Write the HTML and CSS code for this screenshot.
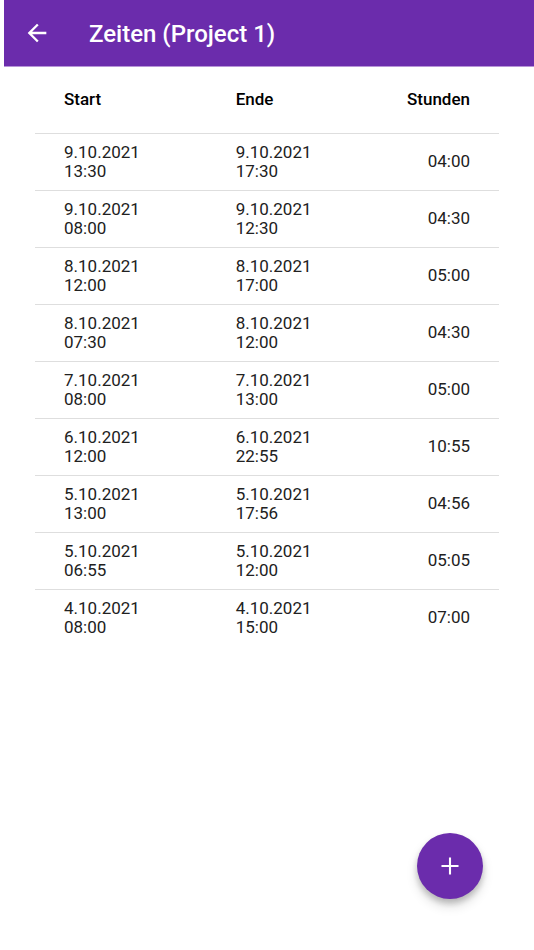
FILE: index.html
```html
<!DOCTYPE html>
<html lang="de">
<head>
  <meta charset="UTF-8" />
  <meta name="viewport" content="width=device-width, initial-scale=1.0" />
  <title>Zeiten (Project 1)</title>
  <link rel="stylesheet" href="styles.css">
</head>
<body>
  <header class="app-bar">
    <button class="back-btn" type="button" aria-label="Zurück">
      <svg viewBox="0 0 24 24" aria-hidden="true"><path d="M20 11H7.83l5.59-5.59L12 4l-8 8 8 8 1.41-1.41L7.83 13H20v-2z"/></svg>
    </button>
    <h1 class="title">Zeiten (Project 1)</h1>
  </header>

  <main class="content">
    <table class="times">
      <thead>
        <tr><th scope="col">Start</th><th scope="col">Ende</th><th scope="col" class="hours">Stunden</th></tr>
      </thead>
      <tbody>
        <tr><td>9.10.2021<br>13:30</td><td>9.10.2021<br>17:30</td><td class="hours">04:00</td></tr>
        <tr><td>9.10.2021<br>08:00</td><td>9.10.2021<br>12:30</td><td class="hours">04:30</td></tr>
        <tr><td>8.10.2021<br>12:00</td><td>8.10.2021<br>17:00</td><td class="hours">05:00</td></tr>
        <tr><td>8.10.2021<br>07:30</td><td>8.10.2021<br>12:00</td><td class="hours">04:30</td></tr>
        <tr><td>7.10.2021<br>08:00</td><td>7.10.2021<br>13:00</td><td class="hours">05:00</td></tr>
        <tr><td>6.10.2021<br>12:00</td><td>6.10.2021<br>22:55</td><td class="hours">10:55</td></tr>
        <tr><td>5.10.2021<br>13:00</td><td>5.10.2021<br>17:56</td><td class="hours">04:56</td></tr>
        <tr><td>5.10.2021<br>06:55</td><td>5.10.2021<br>12:00</td><td class="hours">05:05</td></tr>
        <tr><td>4.10.2021<br>08:00</td><td>4.10.2021<br>15:00</td><td class="hours">07:00</td></tr>
      </tbody>
    </table>
  </main>

  <button class="fab" type="button" aria-label="Zeit hinzufügen">
    <svg viewBox="0 0 24 24" aria-hidden="true"><path d="M19.3 12.9h-6.4v6.4h-1.8v-6.4H4.7v-1.8h6.4V4.7h1.8v6.4h6.4z"/></svg>
  </button>
</body>
</html>
```
FILE: styles.css
```css
* {
  box-sizing: border-box;
}
body {
  margin: 0;
  min-height: 100vh;
  background: #fff;
  color: #212121;
  font-family: Roboto, sans-serif;
}
button {
  display: flex;
  align-items: center;
  justify-content: center;
  padding: 0;
  border: none;
  color: #fff;
  cursor: pointer;
}
svg {
  width: 28px;
  height: 28px;
  fill: currentColor;
}

/* App bar */
.app-bar {
  display: flex;
  align-items: center;
  gap: 28px;
  height: 67px;
  margin-left: 4px;
  padding: 0 9px;
  border-bottom: 1px solid #b794d8;
  background: #6b2cac;
  color: #fff;
}
.back-btn {
  width: 48px;
  height: 48px;
  background: transparent;
}
.title {
  margin: 0;
  padding-top: 2px;
  font-size: 24px;
  font-weight: 500;
}

/* Table of times */
.content {
  padding: 0 35px;
}
.times {
  width: 100%;
  border-collapse: collapse;
  table-layout: fixed;
  font-size: 17px;
  line-height: 19px;
}
.times th,
.times td {
  width: 37%;
  padding: 9px 29px;
  text-align: left;
}
.times th {
  height: 66px;
  color: #000;
  font-weight: 500;
}
.times td {
  border-top: 1px solid #dedede;
}
.times .hours {
  width: 26%;
  padding-left: 0;
  text-align: right;
}

/* Add button */
.fab {
  position: fixed;
  right: 51px;
  bottom: 51px;
  width: 66px;
  height: 66px;
  border-radius: 50%;
  background: #6b2cac;
  box-shadow: 0 4px 6px rgba(0, 0, 0, 0.2), 0 7px 12px rgba(0, 0, 0, 0.14);
}
```
